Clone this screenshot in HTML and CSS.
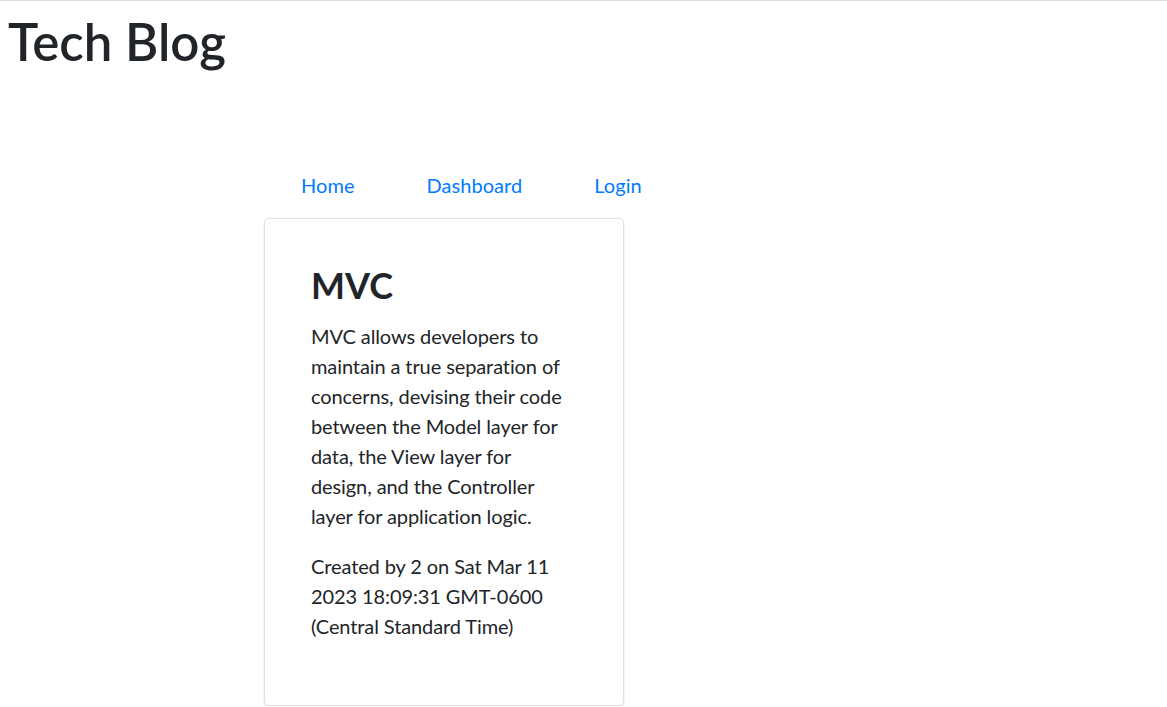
FILE: index.html
```html
<!DOCTYPE html>
<html lang="en">
<head>
<meta charset="utf-8">
<title>Tech Blog</title>
<link rel="stylesheet" href="styles.css">
</head>
<body>
<header class="site-header">
  <h1 class="site-title">Tech Blog</h1>
</header>
<main class="main">
  <nav class="nav">
    <a class="nav-link" href="#">Home</a>
    <a class="nav-link" href="#">Dashboard</a>
    <a class="nav-link" href="#">Login</a>
  </nav>
  <article class="card">
    <h2 class="card-title">MVC</h2>
    <p class="card-text">MVC allows developers to maintain a true separation of concerns, devising their code between the Model layer for data, the View layer for design, and the Controller layer for application logic.</p>
    <p class="card-meta">Created by 2 on Sat Mar 11 2023 18:09:31 GMT-0600 (Central Standard Time)</p>
  </article>
</main>
</body>
</html>
```
FILE: styles.css
```css
html, body {
  margin: 0;
  padding: 0;
  background: #fff;
}
body {
  border-top: 1px solid #dcdcdc;
  font-family: Lato, "Noto Sans", sans-serif;
  font-size: 20px;
  line-height: 1.5;
  color: #212529;
  letter-spacing: -0.1px;
}
.site-header {
  padding: 0 0 0 8px;
}
.site-title {
  margin: 10px 0 0;
  font-size: 51px;
  font-weight: 600;
  line-height: 1.2;
  letter-spacing: 0;
}
.main {
  display: flex;
  flex-direction: column;
  align-items: flex-start;
  margin-left: 264px;
  margin-top: 98px;
}
.nav {
  display: flex;
  padding: 0 0 18px 1px;
}
.nav-link {
  color: #007bff;
  text-decoration: none;
  padding: 0 36px;
  letter-spacing: 0.05px;
}
.card {
  box-sizing: border-box;
  width: 360px;
  height: 488px;
  border: 1px solid rgba(0, 0, 0, 0.125);
  border-radius: 5px;
  box-shadow: 0 1px 2px rgba(0, 0, 0, 0.12);
  padding: 45px 47px 0 46px;
}
.card-title {
  margin: 0 0 14px;
  font-size: 36px;
  font-weight: 700;
  line-height: 1.2;
  letter-spacing: 0;
}
.card-text {
  margin: 0 0 20px;
}
.card-meta {
  margin: 0;
}
```
